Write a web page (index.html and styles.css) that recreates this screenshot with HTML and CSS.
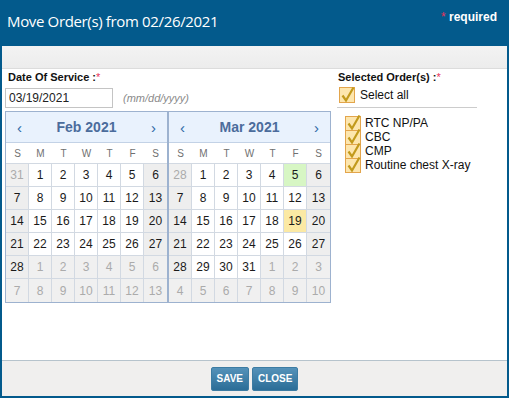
FILE: index.html
```html
<!DOCTYPE html>
<html lang="en">
<head>
    <meta charset="UTF-8">
    <meta name="viewport" content="width=device-width, initial-scale=1.0">
    <title>Move Order(s)</title>
    <link rel="stylesheet" href="styles.css">
</head>
<body>

    <div class="dialog">
        <div class="titlebar">
            <span class="title">Move Order(s) from 02/26/2021</span>
            <span class="required"><span class="star">*</span> required</span>
        </div>
        <div class="toolbar"></div>

        <div class="content">
            <div class="left">
                <div class="label">Date Of Service :<span class="star">*</span></div>
                <div class="date-row">
                    <input type="text" class="date-input" value="03/19/2021">
                    <span class="hint">(mm/dd/yyyy)</span>
                </div>

                <div class="calendars">
                    <div class="cal">
                        <div class="cal-head">
                            <span class="nav">&lsaquo;</span>
                            <span class="month">Feb 2021</span>
                            <span class="nav">&rsaquo;</span>
                        </div>
                        <div class="dow">
                            <span>S</span><span>M</span><span>T</span><span>W</span><span>T</span><span>F</span><span>S</span>
                        </div>
                        <div class="days">
                            <span class="other">31</span><span>1</span><span>2</span><span>3</span><span>4</span><span>5</span><span class="wkend">6</span>
                            <span class="wkend">7</span><span>8</span><span>9</span><span>10</span><span>11</span><span>12</span><span class="wkend">13</span>
                            <span class="wkend">14</span><span>15</span><span>16</span><span>17</span><span>18</span><span>19</span><span class="wkend">20</span>
                            <span class="wkend">21</span><span>22</span><span>23</span><span>24</span><span>25</span><span>26</span><span class="wkend">27</span>
                            <span class="wkend">28</span><span class="other">1</span><span class="other">2</span><span class="other">3</span><span class="other">4</span><span class="other">5</span><span class="other">6</span>
                            <span class="other">7</span><span class="other">8</span><span class="other">9</span><span class="other">10</span><span class="other">11</span><span class="other">12</span><span class="other">13</span>
                        </div>
                    </div>
                    <div class="cal">
                        <div class="cal-head">
                            <span class="nav">&lsaquo;</span>
                            <span class="month">Mar 2021</span>
                            <span class="nav">&rsaquo;</span>
                        </div>
                        <div class="dow">
                            <span>S</span><span>M</span><span>T</span><span>W</span><span>T</span><span>F</span><span>S</span>
                        </div>
                        <div class="days">
                            <span class="other">28</span><span>1</span><span>2</span><span>3</span><span>4</span><span class="today">5</span><span class="wkend">6</span>
                            <span class="wkend">7</span><span>8</span><span>9</span><span>10</span><span>11</span><span>12</span><span class="wkend">13</span>
                            <span class="wkend">14</span><span>15</span><span>16</span><span>17</span><span>18</span><span class="selected">19</span><span class="wkend">20</span>
                            <span class="wkend">21</span><span>22</span><span>23</span><span>24</span><span>25</span><span>26</span><span class="wkend">27</span>
                            <span class="wkend">28</span><span>29</span><span>30</span><span>31</span><span class="other">1</span><span class="other">2</span><span class="other">3</span>
                            <span class="other">4</span><span class="other">5</span><span class="other">6</span><span class="other">7</span><span class="other">8</span><span class="other">9</span><span class="other">10</span>
                        </div>
                    </div>
                </div>
            </div>

            <div class="right">
                <div class="label">Selected Order(s) :<span class="star">*</span></div>
                <div class="select-all">
                    <svg class="check big" viewBox="0 0 16 16"><rect x="0.5" y="0.5" width="15" height="15" fill="#fde6ae" stroke="#e3a54c"/><path d="M3.5 8.5 L7 13.5 L14.5 0.5" fill="none" stroke="#c29a1c" stroke-width="2.2"/></svg>
                    <span>Select all</span>
                </div>
                <div class="orders">
                    <div class="order"><svg class="check" viewBox="0 0 16 16"><rect x="0.5" y="1.5" width="15" height="14" fill="#fde6ae" stroke="#e3a54c"/><path d="M3.5 8.5 L7 13.5 L14.5 0.5" fill="none" stroke="#c29a1c" stroke-width="2.2"/></svg><span>RTC NP/PA</span></div>
                    <div class="order"><svg class="check" viewBox="0 0 16 16"><rect x="0.5" y="1.5" width="15" height="14" fill="#fde6ae" stroke="#e3a54c"/><path d="M3.5 8.5 L7 13.5 L14.5 0.5" fill="none" stroke="#c29a1c" stroke-width="2.2"/></svg><span>CBC</span></div>
                    <div class="order"><svg class="check" viewBox="0 0 16 16"><rect x="0.5" y="1.5" width="15" height="14" fill="#fde6ae" stroke="#e3a54c"/><path d="M3.5 8.5 L7 13.5 L14.5 0.5" fill="none" stroke="#c29a1c" stroke-width="2.2"/></svg><span>CMP</span></div>
                    <div class="order"><svg class="check" viewBox="0 0 16 16"><rect x="0.5" y="1.5" width="15" height="14" fill="#fde6ae" stroke="#e3a54c"/><path d="M3.5 8.5 L7 13.5 L14.5 0.5" fill="none" stroke="#c29a1c" stroke-width="2.2"/></svg><span>Routine chest X-ray</span></div>
                </div>
            </div>
        </div>

        <div class="footer">
            <button class="btn">SAVE</button>
            <button class="btn">CLOSE</button>
        </div>
    </div>

</body>
</html>
```

FILE: styles.css
```css
body {
    margin: 0;
    font-family: "Liberation Sans", Arial, sans-serif;
    color: #111;
}
.dialog {
    width: 509px;
    height: 398px;
    box-sizing: border-box;
    border: 2px solid #035a8c;
    border-top: none;
    display: flex;
    flex-direction: column;
    background: white;
}
.titlebar {
    height: 46px;
    background-color: #035a8c;
    margin: 0 -2px;
    display: flex;
    justify-content: space-between;
    color: white;
}
.title {
    font-family: "Open Sans", sans-serif;
    font-size: 15px;
    padding: 11px 0 0 7px;
    letter-spacing: -0.35px;
}
.required {
    font-size: 12px;
    font-weight: bold;
    padding: 10px 12px 0 0;
}
.star {
    color: #e8335a;
    font-weight: normal;
}
.toolbar {
    height: 22px;
    background: linear-gradient(#f3f3f3, #ececec);
    border-bottom: 1px solid #dcdcdc;
}
.content {
    flex: 1;
    display: flex;
    padding: 2px 3px 0;
}
.label {
    font-size: 11px;
    font-weight: bold;
    line-height: 13px;
    padding-left: 3px;
}
.date-row {
    display: flex;
    align-items: center;
    margin-top: 4px;
}
.date-input {
    width: 108px;
    height: 20px;
    box-sizing: border-box;
    border: 1px solid #c4c4c4;
    padding: 0 3px;
    margin: 0;
    font-family: "Liberation Sans", Arial, sans-serif;
    font-size: 12px;
    color: #222;
}
.hint {
    font-size: 11px;
    font-style: italic;
    color: #8a8a8a;
    margin-left: 10px;
}
.calendars {
    display: flex;
    margin-top: 3px;
}
.cal {
    width: 161px;
    border: 1px solid #9db2cf;
}
.cal-head {
    height: 30px;
    background-color: #e9f2fd;
    border-bottom: 1px solid #c3d2e6;
    display: flex;
    align-items: center;
    justify-content: space-between;
    padding: 0 11px 0 11px;
}
.nav {
    color: #2d68a6;
    font-size: 15px;
}
.month {
    color: #4b6c9c;
    font-size: 14px;
    font-weight: bold;
}
.dow {
    display: grid;
    grid-template-columns: repeat(7, 23px);
    height: 20px;
    align-items: center;
    text-align: center;
    font-size: 10px;
    color: #707070;
    border-bottom: 1px solid #d2d9e2;
}
.days {
    display: grid;
    grid-template-columns: repeat(7, 23px);
    grid-auto-rows: 23px;
}
.days span {
    box-sizing: border-box;
    border-right: 1px solid #d2d9e2;
    border-bottom: 1px solid #d2d9e2;
    display: flex;
    align-items: center;
    justify-content: center;
    font-size: 12px;
    color: #1a1a1a;
    background: white;
}
.days span:nth-child(7n) {
    border-right: none;
}
.days span:nth-last-child(-n+7) {
    border-bottom: none;
}
.days .wkend {
    background-color: #eeeeee;
}
.days .other {
    background-color: #f0f0f0;
    color: #ababab;
}
.days .today {
    background-color: #d7f6c4;
}
.days .selected {
    background-color: #fbe9a4;
}
.right {
    width: 140px;
    margin-left: 6px;
}
.right .label {
    padding-left: 1px;
}
.select-all {
    display: flex;
    align-items: center;
    gap: 5px;
    font-size: 12px;
    padding: 3px 0 4px 2px;
    border-bottom: 1px solid #cccccc;
}
.check {
    width: 16px;
    height: 16px;
    flex-shrink: 0;
}
.orders {
    padding: 8px 0 0 8px;
}
.order {
    display: flex;
    align-items: center;
    gap: 4px;
    height: 14px;
    font-size: 12px;
    line-height: 14px;
}
.order .check {
    margin: -1px 0;
}
.footer {
    height: 35px;
    border-top: 1px solid #b6c3cc;
    background-color: #f0efee;
    display: flex;
    align-items: center;
    justify-content: center;
    gap: 3px;
}
.btn {
    height: 24px;
    padding: 0 5px;
    margin: 0;
    border: 1px solid #3d7ca3;
    border-radius: 2px;
    background: linear-gradient(#5592b9, #2b6d97);
    color: white;
    font-family: "Liberation Sans", Arial, sans-serif;
    font-size: 10px;
    font-weight: bold;
    cursor: pointer;
}
```
